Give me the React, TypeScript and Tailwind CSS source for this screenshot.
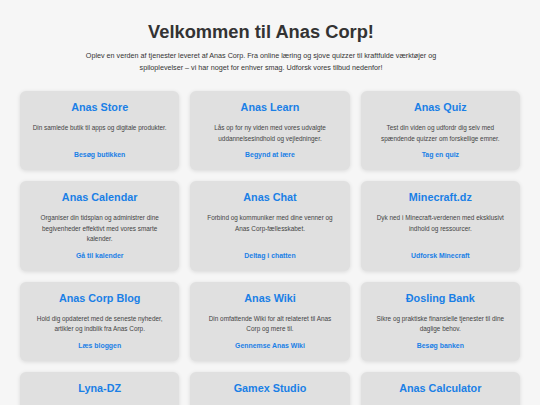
import React from 'react';

interface Service {
  title: string;
  desc: string;
  link: string;
}

const services: Service[] = [
  { title: 'Anas Store', desc: 'Din samlede butik til apps og digitale produkter.', link: 'Besøg butikken' },
  { title: 'Anas Learn', desc: 'Lås op for ny viden med vores udvalgte uddannelsesindhold og vejledninger.', link: 'Begynd at lære' },
  { title: 'Anas Quiz', desc: 'Test din viden og udfordr dig selv med spændende quizzer om forskellige emner.', link: 'Tag en quiz' },
  { title: 'Anas Calendar', desc: 'Organiser din tidsplan og administrer dine begivenheder effektivt med vores smarte kalender.', link: 'Gå til kalender' },
  { title: 'Anas Chat', desc: 'Forbind og kommuniker med dine venner og Anas Corp-fællesskabet.', link: 'Deltag i chatten' },
  { title: 'Minecraft.dz', desc: 'Dyk ned i Minecraft-verdenen med eksklusivt indhold og ressourcer.', link: 'Udforsk Minecraft' },
  { title: 'Anas Corp Blog', desc: 'Hold dig opdateret med de seneste nyheder, artikler og indblik fra Anas Corp.', link: 'Læs bloggen' },
  { title: 'Anas Wiki', desc: 'Din omfattende Wiki for alt relateret til Anas Corp og mere til.', link: 'Gennemse Anas Wiki' },
  { title: 'Đosling Bank', desc: 'Sikre og praktiske finansielle tjenester til dine daglige behov.', link: 'Besøg banken' },
  { title: 'Lyna-DZ', desc: 'Oplev Lyna-DZ med spændende indhold og fællesskab.', link: 'Besøg Lyna-DZ' },
  { title: 'Gamex Studio', desc: 'Spil og underholdning skabt af vores kreative studie.', link: 'Udforsk spil' },
  { title: 'Anas Calculator', desc: 'Hurtige og præcise beregninger til hverdagen.', link: 'Åbn lommeregner' },
];

const Card = ({ s }: { s: Service }) => (
  <div className="flex flex-col items-center text-center bg-[#e0e0e0] rounded-[6px] shadow-[0_1px_4px_rgba(0,0,0,0.12)] px-[12px] pt-[9px] pb-[10px]">
    <h2 className="text-[10.8px] leading-[14px] font-bold text-[#1a7fe6] mb-[9px]">{s.title}</h2>
    <p className="text-[6.4px] leading-[10.5px] text-[#444] mb-[6px]">{s.desc}</p>
    <a href="#" className="mt-auto text-[6.9px] leading-[10px] font-bold text-[#1a7fe6]">{s.link}</a>
  </div>
);

export default function App() {
  return (
    <div className="min-h-screen bg-[#f6f6f6] text-[#333] font-['Liberation_Sans',Arial,sans-serif] px-[20px] pt-[21px] pb-[20px]">
      {/* Header */}
      <header className="text-center pr-[18px]">
        <h1 className="text-[18.3px] leading-[21px] font-bold text-[#333]">Velkommen til Anas Corp!</h1>
        <p className="mx-auto max-w-[380px] mt-[8px] text-[7.2px] leading-[12px] text-[#333]">
          Oplev en verden af tjenester leveret af Anas Corp. Fra online læring og sjove quizzer til kraftfulde værktøjer og spiloplevelser – vi har noget for enhver smag. Udforsk vores tilbud nedenfor!
        </p>
      </header>

      {/* Services */}
      <main className="grid grid-cols-3 gap-[11px] mt-[17px]">
        {services.map(s => <Card key={s.title} s={s} />)}
      </main>
    </div>
  );
}
